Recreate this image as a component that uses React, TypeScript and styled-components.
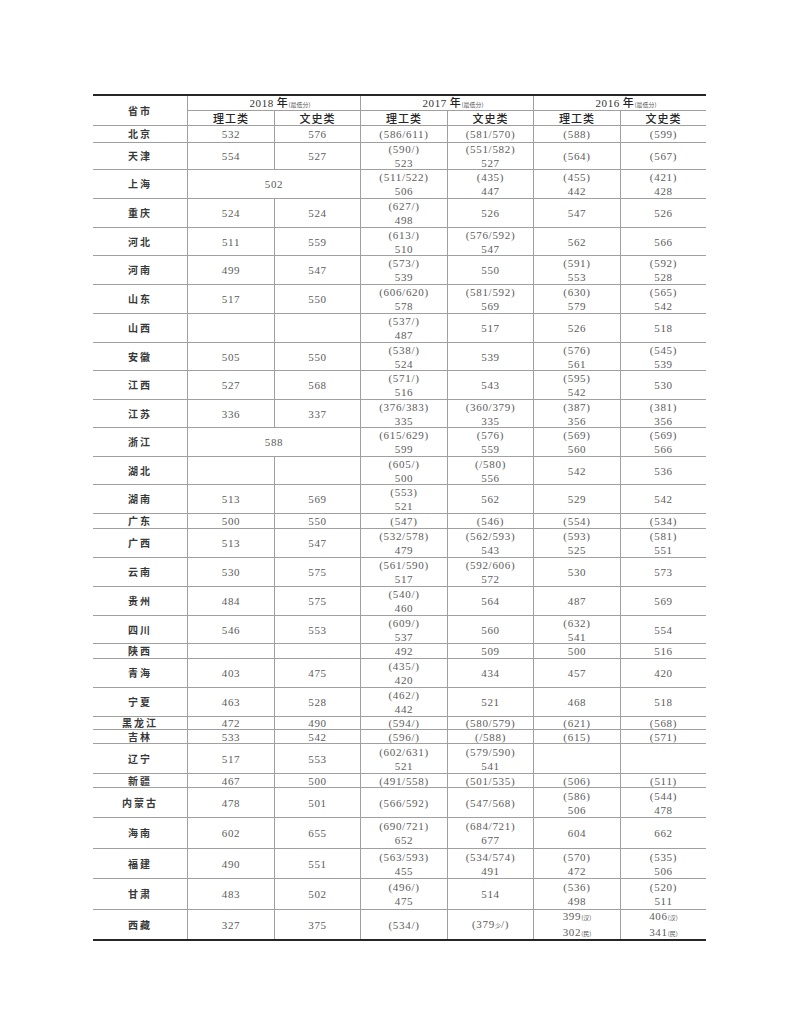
import * as React from 'react';
import styled, { createGlobalStyle } from 'styled-components';

const GlobalStyle = createGlobalStyle`
    html, body {
        margin: 0;
        padding: 0;
        background: #ffffff;
    }
`;

// row tracks measured off the scan (header x2, then one per province)
const rowTracks = [
    14, 14, 16, 26, 28, 28, 27, 28, 28, 28, 27, 28, 27, 28, 27, 28, 14, 28, 28, 28,
    27, 14, 28, 28, 12, 13, 29, 13, 29, 30, 29, 30, 29,
];

const Page = styled.div`
    width: 800px;
    height: 1035px;
    padding: 94px 0 0 93px;
    box-sizing: border-box;
`;

const Grid = styled.div`
    display: grid;
    width: 613px;
    grid-template-columns: 94px 86px 85px 86px 85px 86px 85px;
    grid-template-rows: ${rowTracks.map((h) => `${h}px`).join(' ')};
    gap: 1px;
    background: #a0a0a0;
    border-top: 2px solid #262626;
    border-bottom: 2px solid #262626;
`;

const Cell = styled.div<{ $span?: number; $rows?: number }>`
    background: #ffffff;
    display: flex;
    flex-direction: column;
    align-items: center;
    justify-content: center;
    grid-column: span ${(p) => p.$span || 1};
    grid-row: span ${(p) => p.$rows || 1};
    white-space: nowrap;
`;

const NameCell = styled(Cell)`
    font-family: "Noto Sans CJK SC", sans-serif;
    font-weight: 700;
    font-size: 10px;
    letter-spacing: 2px;
    color: #383838;
    line-height: 12px;
`;

const HeadCell = styled(Cell)`
    font-family: "Noto Sans CJK SC", sans-serif;
    font-weight: 500;
    font-size: 11px;
    letter-spacing: 1px;
    color: #262626;
    line-height: 12px;
`;

const YearCell = styled(Cell)`
    font-family: "Liberation Serif", serif;
    font-size: 11px;
    letter-spacing: 0.6px;
    color: #333333;
    line-height: 12px;
`;

const YearText = styled.span`
    display: block;
    line-height: 12px;
    padding-left: 12px;
`;

const Nian = styled.span`
    font-family: "Noto Sans CJK SC", sans-serif;
    font-weight: 500;
    margin-left: 3px;
    color: #222222;
`;

const NumCell = styled(Cell)`
    font-family: "Liberation Serif", serif;
    font-size: 11px;
    letter-spacing: 0.7px;
    color: #5c5c5c;
    line-height: 14px;
`;

const Line = styled.span`
    display: block;
`;

const Tiny = styled.span`
    font-family: "Noto Sans CJK SC", sans-serif;
    font-size: 6px;
    letter-spacing: 0;
    color: #555555;
`;

type Row = [string, string, string | null, string, string, string, string];

// null in slot 2 means the 2018 value covers both columns
const rows: Row[] = [
    ['北京', '532', '576', '(586/611)', '(581/570)', '(588)', '(599)'],
    ['天津', '554', '527', '(590/)|523', '(551/582)|527', '(564)', '(567)'],
    ['上海', '502', null, '(511/522)|506', '(435)|447', '(455)|442', '(421)|428'],
    ['重庆', '524', '524', '(627/)|498', '526', '547', '526'],
    ['河北', '511', '559', '(613/)|510', '(576/592)|547', '562', '566'],
    ['河南', '499', '547', '(573/)|539', '550', '(591)|553', '(592)|528'],
    ['山东', '517', '550', '(606/620)|578', '(581/592)|569', '(630)|579', '(565)|542'],
    ['山西', '', '', '(537/)|487', '517', '526', '518'],
    ['安徽', '505', '550', '(538/)|524', '539', '(576)|561', '(545)|539'],
    ['江西', '527', '568', '(571/)|516', '543', '(595)|542', '530'],
    ['江苏', '336', '337', '(376/383)|335', '(360/379)|335', '(387)|356', '(381)|356'],
    ['浙江', '588', null, '(615/629)|599', '(576)|559', '(569)|560', '(569)|566'],
    ['湖北', '', '', '(605/)|500', '(/580)|556', '542', '536'],
    ['湖南', '513', '569', '(553)|521', '562', '529', '542'],
    ['广东', '500', '550', '(547)', '(546)', '(554)', '(534)'],
    ['广西', '513', '547', '(532/578)|479', '(562/593)|543', '(593)|525', '(581)|551'],
    ['云南', '530', '575', '(561/590)|517', '(592/606)|572', '530', '573'],
    ['贵州', '484', '575', '(540/)|460', '564', '487', '569'],
    ['四川', '546', '553', '(609/)|537', '560', '(632)|541', '554'],
    ['陕西', '', '', '492', '509', '500', '516'],
    ['青海', '403', '475', '(435/)|420', '434', '457', '420'],
    ['宁夏', '463', '528', '(462/)|442', '521', '468', '518'],
    ['黑龙江', '472', '490', '(594/)', '(580/579)', '(621)', '(568)'],
    ['吉林', '533', '542', '(596/)', '(/588)', '(615)', '(571)'],
    ['辽宁', '517', '553', '(602/631)|521', '(579/590)|541', '', ''],
    ['新疆', '467', '500', '(491/558)', '(501/535)', '(506)', '(511)'],
    ['内蒙古', '478', '501', '(566/592)', '(547/568)', '(586)|506', '(544)|478'],
    ['海南', '602', '655', '(690/721)|652', '(684/721)|677', '604', '662'],
    ['福建', '490', '551', '(563/593)|455', '(534/574)|491', '(570)|472', '(535)|506'],
    ['甘肃', '483', '502', '(496/)|475', '514', '(536)|498', '(520)|511'],
    ['西藏', '327', '375', '(534/)', '(379{少}/)', '399{(汉)}|302{(民)}', '406{(汉)}|341{(民)}'],
];

// "{...}" marks the small print inside a value
function renderLine(text: string) {
    return text.split(/(\{[^}]*\})/).filter(Boolean).map((part, i) =>
        part.startsWith('{')
            ? <Tiny key={i}>{part.slice(1, -1)}</Tiny>
            : <React.Fragment key={i}>{part}</React.Fragment>
    );
}

function Value({ text, span }: { text: string; span?: number }) {
    return (
        <NumCell $span={span}>
            {text.split('|').map((l, i) => (
                <Line key={i}>{renderLine(l)}</Line>
            ))}
        </NumCell>
    );
}

export default function App() {
    return (
        <>
            <GlobalStyle />
            <Page>
                <Grid>
                    <NameCell $rows={2}>省市</NameCell>
                    {['2018', '2017', '2016'].map((y) => (
                        <YearCell key={y} $span={2}>
                            <YearText>
                                {y}<Nian>年</Nian><Tiny>(最低分)</Tiny>
                            </YearText>
                        </YearCell>
                    ))}
                    {[0, 1, 2].map((i) => (
                        <React.Fragment key={i}>
                            <HeadCell>理工类</HeadCell>
                            <HeadCell>文史类</HeadCell>
                        </React.Fragment>
                    ))}
                    {rows.map(([name, a, b, c, d, e, f]) => (
                        <React.Fragment key={name}>
                            <NameCell>{name}</NameCell>
                            {b === null ? (
                                <Value text={a} span={2} />
                            ) : (
                                <>
                                    <Value text={a} />
                                    <Value text={b} />
                                </>
                            )}
                            <Value text={c} />
                            <Value text={d} />
                            <Value text={e} />
                            <Value text={f} />
                        </React.Fragment>
                    ))}
                </Grid>
            </Page>
        </>
    );
}
